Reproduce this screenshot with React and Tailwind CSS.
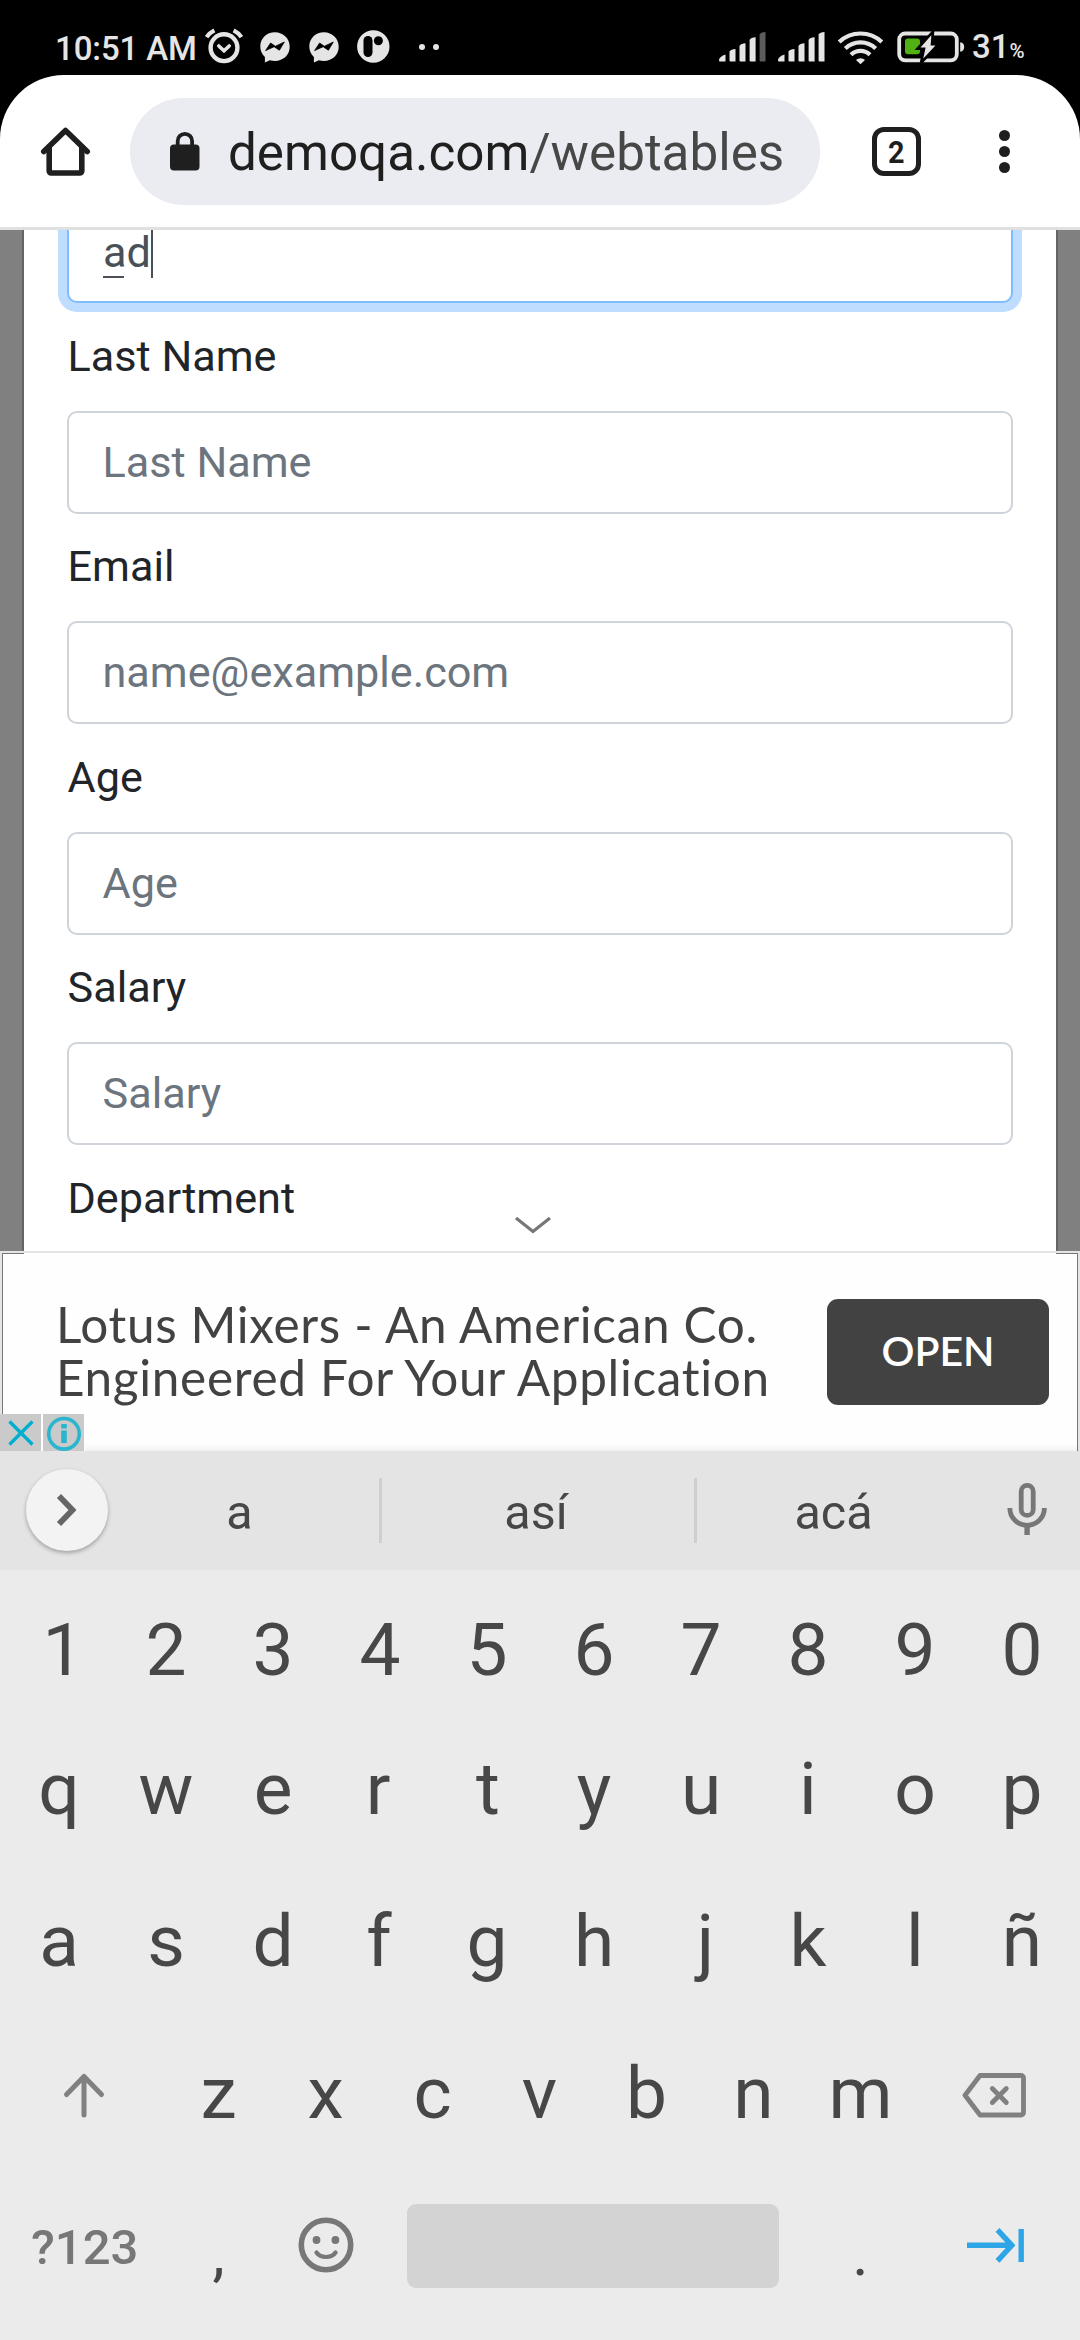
function AlarmIcon() {
  return (
    <svg width="42" height="38" viewBox="203 28 42 38" fill="none" stroke="#e5e5e5" strokeLinecap="round">
      <circle cx="224" cy="47.7" r="13.4" strokeWidth="4.4" />
      <path d="M218.8 46 L224 50.8 L229.2 46" strokeWidth="3.6" />
      <path d="M206.600 37.200 Q209.500 32.800 214.400 30.400 M241.400 37.200 Q238.500 32.800 233.600 30.400" strokeWidth="4.200" strokeLinecap="butt" />
    </svg>
  );
}

function MessengerIcon() {
  return (
    <svg width="30" height="31" viewBox="0 0 30 31">
      <path d="M15 .3C6.700 .3.3 6.400.3 14.500c0 4.200 1.700 7.900 4.600 10.500v5.400l5-2.100c1.600.5 3.300.7 5.100.7 8.300 0 14.700-6.100 14.700-14.200S23.300.3 15 .3z" fill="#e5e5e5" />
      <path d="M5.600 18.600l5-7.600 4.800 3.300 8.900-4.300-4.900 8.200-5.300-3.500z" fill="#000" stroke="#000" strokeWidth=".8" strokeLinejoin="round" />
    </svg>
  );
}

function PatreonIcon() {
  return (
    <svg width="33" height="33" viewBox="356.500 30 33 33">
      <circle cx="372.800" cy="46.500" r="16.200" fill="#e5e5e5" />
      <rect x="363" y="36" width="9" height="21" rx="4.500" />
      <circle cx="377.900" cy="40.700" r="4.500" />
    </svg>
  );
}

function SignalIcon({ last }) {
  return (
    <svg width="47" height="32" viewBox="0 0 47 32" fill="#e5e5e5">
      <path d="M0 28.500Q1 25.500 6.500 23.500V30.500H1Q0 30.500 0 29.500z" />
      <path d="M10.500 20.500Q12 18.300 16.500 18V30.500H11.500Q10.500 30.500 10.500 29.500z" />
      <path d="M20.500 15Q22 12.500 26.500 12.300V30.500H21.500Q20.500 30.500 20.500 29.500z" />
      <path d="M30.600 9Q32 6.500 36.600 6.300V30.500H31.600Q30.600 30.500 30.600 29.500z" />
      <path d="M40.600 3.500Q42 1 46.500 1V30.500H41.600Q40.600 30.500 40.600 29.500z" fill={last} />
    </svg>
  );
}

function WifiIcon() {
  return (
    <svg width="47" height="35" viewBox="0 0 47 35" fill="none" stroke="#e5e5e5" strokeWidth="4.200">
      <path d="M2.200 12a31 31 0 0 1 42.600 0" />
      <path d="M8.300 18.400a22 22 0 0 1 30.400 0" />
      <path d="M14 24.800a13.500 13.500 0 0 1 19 0" />
      <path d="M19 30a6.500 6.500 0 0 1 9 0l-4.500 4.200z" fill="#e5e5e5" stroke="none" />
    </svg>
  );
}

function BatteryIcon() {
  return (
    <svg width="68" height="34" viewBox="897 29.500 68 34">
      <rect x="899.200" y="33" width="57.600" height="26.800" rx="6" fill="none" stroke="#e5e5e5" strokeWidth="3.800" />
      <rect x="905" y="38" width="15" height="15.700" rx="3" fill="#50b014" />
      <path d="M960.200 41.800q4 .5 4 4.700t-4 4.700z" fill="#e5e5e5" />
      <path d="M933 31 L917.500 48.300 H924 L921 62.500 L938.500 43.700 H932z" fill="#e5e5e5" stroke="#000" strokeWidth="2.600" />
    </svg>
  );
}

function StatusBar() {
  return (
    <header className="flex h-[75px] w-full items-center bg-black pt-[18px] text-[#e5e5e5]">
      <div className="ml-[55px] w-[148px] pt-[4px] text-[33px] leading-[40px] font-medium tracking-[-0.1px] whitespace-nowrap">10:51 AM</div>
      <div><AlarmIcon /></div>
      <div className="ml-[15px] pt-[1px]"><MessengerIcon /></div>
      <div className="ml-[19px] pt-[1px]"><MessengerIcon /></div>
      <div className="ml-[18px]"><PatreonIcon /></div>
      <div className="ml-[29px] h-[6px] w-[6px] rounded-full bg-[#e5e5e5]" />
      <div className="ml-[8px] h-[6px] w-[6px] rounded-full bg-[#e5e5e5]" />
      <div className="ml-auto flex items-center pt-[1px]">
        <SignalIcon last="#5c5c5c" />
        <div className="ml-[12px]"><SignalIcon last="#e5e5e5" /></div>
        <div className="ml-[12px]"><WifiIcon /></div>
        <div className="ml-[13px]"><BatteryIcon /></div>
      </div>
      <div className="ml-[7px] flex w-[108px] items-baseline pt-[4px] leading-[40px] font-medium">
        <span className="text-[33px]">31</span>
        <span className="text-[20.500px]">%</span>
      </div>
    </header>
  );
}

function BrowserBar() {
  return (
    <div className="bg-black">
      <div className="flex h-[155px] items-center rounded-t-[64px] border-b-[3px] border-[#e0e0e0] bg-white">
        <svg className="ml-[40px]" width="51" height="51" viewBox="40 126 51 51" fill="none" stroke="#1f1f1f" strokeWidth="5.600" strokeLinejoin="round" strokeLinecap="round">
          <path d="M49.200 147v24a2 2 0 0 0 2 2h28.600a2 2 0 0 0 2-2v-24" />
          <path d="M43.800 151.500L65.500 130.500l21.700 21" />
        </svg>
        <div className="ml-[39px] flex h-[107px] w-[690px] items-center rounded-full bg-[#ebecf1] pl-[40px]">
          <svg width="30" height="40" viewBox="0 0 30 40">
            <path d="M7.700 15V10a7.200 7.200 0 0 1 14.400 0V15" fill="none" stroke="#1f1f1f" strokeWidth="3.800" />
            <rect x="0" y="13.500" width="29.500" height="26" rx="4" fill="#1f1f1f" />
          </svg>
          <div className="ml-[28px] pt-[4px] text-[51.200px] leading-[70px] whitespace-nowrap text-[#1f1f1f]">
            demoqa.com<span className="text-[#474747]">/webtables</span>
          </div>
        </div>
        <div className="ml-[52px] flex h-[49px] w-[49px] items-center justify-center rounded-[12px] border-[5.500px] border-[#1f1f1f] text-[32px] leading-none font-bold text-[#1f1f1f]">
          <span className="scale-x-90 pt-[1px]">2</span>
        </div>
        <div className="ml-[78px] flex flex-col gap-[5px]">
          <div className="h-[11px] w-[11px] rounded-full bg-[#1f1f1f]" />
          <div className="h-[11px] w-[11px] rounded-full bg-[#1f1f1f]" />
          <div className="h-[11px] w-[11px] rounded-full bg-[#1f1f1f]" />
        </div>
      </div>
    </div>
  );
}

function Label({ children }) {
  return <div className="h-[87px] pt-[1px] pl-[0.500px] text-[43.200px] leading-[64px] text-[#212529]">{children}</div>;
}

function Field({ label, placeholder }) {
  return (
    <div className="h-[210.600px]">
      <Label>{label}</Label>
      <div className="flex h-[103px] items-center rounded-[10px] border-2 border-[#ced4da] pt-[1px] pl-[33.500px] text-[43.200px] leading-[64px] text-[#6c757d]">{placeholder}</div>
    </div>
  );
}

function PageForm() {
  return (
    <main className="h-[1021px] bg-[#808080] px-[22px]">
      <div className="relative h-full border-x-2 border-[#656565] bg-white px-[43px]">
        <div className="-mx-[9px] rounded-b-[19px] bg-[#bfdeff] px-[9px] pb-[9px]">
          <div className="flex h-[73px] rounded-b-[10px] border-2 border-t-0 border-[#80bdff] bg-white pl-[34px] text-[43.200px] leading-[46px] text-[#495057]">
            <span className="relative h-[48px]">
              a
              <span className="absolute bottom-0 left-0 h-[2px] w-[21px] bg-[#495057]" />
            </span>
            <span className="h-[48px]">d</span>
            <span className="h-[48px] w-[2px] bg-[#495057]" />
          </div>
        </div>
        <div className="pt-[11.600px]">
          <Field label="Last Name" placeholder="Last Name" />
          <Field label="Email" placeholder="name@example.com" />
          <Field label="Age" placeholder="Age" />
          <Field label="Salary" placeholder="Salary" />
          <Label>Department</Label>
        </div>
        <svg className="absolute top-[987px] left-[491px]" width="36" height="17" viewBox="0 0 36 17" fill="none" stroke="#777777" strokeWidth="3.200">
          <path d="M1 1L18 14.500L35 1" />
        </svg>
      </div>
    </main>
  );
}

function AdBanner() {
  return (
    <section className="flex h-[200px] flex-col border-t-2 border-[#e5e5e5] bg-[#e5e5e5] px-[2px]">
      <div className="relative flex h-[198px] border-x border-[#777777] bg-[#fefefe] font-['Lato',sans-serif]">
        <div className="absolute top-0 left-0 h-px w-[21px] bg-[#777777]" />
        <div className="absolute top-0 right-0 h-px w-[21px] bg-[#777777]" />
        <p className="ml-[53px] w-[771px] pt-[45px] text-[49.500px] leading-[53px] whitespace-nowrap text-[#424242]">
          <span className="block tracking-[0.650px]">Lotus Mixers - An American Co.</span>
          <span className="block tracking-[0.670px]">Engineered For Your Application</span>
        </p>
        <button className="mt-[46px] h-[106px] w-[222px] rounded-[11px] bg-[#424242] pb-[2px] text-[41px] font-semibold text-white">OPEN</button>
        <div className="absolute right-0 bottom-0 left-[82px] h-[7px] bg-linear-to-b from-transparent to-black/5" />
        <div className="absolute bottom-0 -left-[3px] flex gap-[2px] bg-white">
          <div className="flex h-[37px] w-[41px] items-center justify-center bg-[#cacaca]">
            <svg width="26" height="26" viewBox="0 0 26 26" stroke="#00aecd" strokeWidth="3.400">
              <path d="M1.500 1.500L24.500 24.500M24.500 1.500L1.500 24.500" />
            </svg>
          </div>
          <div className="flex h-[37px] w-[41px] items-center justify-center bg-[#cacaca]">
            <svg width="36" height="36" viewBox="0 0 36 36" fill="none" stroke="#2bb5cf">
              <circle cx="18" cy="18.800" r="15.300" strokeWidth="3.600" />
              <path d="M18 15.500V28" strokeWidth="5.600" />
              <path d="M18 9V13.500" strokeWidth="5.600" />
            </svg>
          </div>
        </div>
      </div>
    </section>
  );
}

function Suggestions() {
  return (
    <div className="flex h-[119px] items-center bg-[#e4e4e4] text-[48.500px] text-[#474747]">
      <div className="-mt-[2px] ml-[26px] flex h-[82px] w-[82px] items-center justify-center rounded-full bg-[#f3f3f3] shadow-[0_2px_4px_rgba(0,0,0,0.3)]">
        <svg width="24" height="34" viewBox="0 0 24 34" fill="none" stroke="#666666" strokeWidth="5.800">
          <path d="M4 3L17.500 17L4 31" />
        </svg>
      </div>
      <div className="w-[271px] pt-[5px] pr-[8px] text-center">a</div>
      <div className="h-[65px] w-[3px] bg-[#cfcfcf]" />
      <div className="w-[312px] pt-[5px] pr-[4px] text-center">así</div>
      <div className="h-[65px] w-[3px] bg-[#cfcfcf]" />
      <div className="w-[273px] pt-[5px] text-center">acá</div>
      <svg className="-mt-[3px] ml-[37px]" width="40" height="54" viewBox="1006.500 1482 40 54" fill="none" stroke="#777777" strokeWidth="4.800">
        <rect x="1020.700" y="1485.400" width="12" height="30" rx="6" />
        <path d="M1009.300 1508a17.300 17.300 0 0 0 34.600 0" />
        <path d="M1026.600 1524v11" strokeWidth="5.400" />
      </svg>
    </div>
  );
}

// Glyphs whose ink sits off the middle of their advance width.
const OPTICAL_SHIFT = {
  1: "pl-[8px]",
  j: "pl-[9px]",
  t: "pl-[2px]",
  r: "pr-[4px]",
  f: "pr-[2px]",
};

function KeyRow({ keys, className }) {
  return (
    <div className={className}>
      {keys.map((k) => (
        <div key={k} className={`w-[107px] text-center ${OPTICAL_SHIFT[k] ?? ""}`}>{k}</div>
      ))}
    </div>
  );
}

function Keyboard() {
  return (
    <section className="h-[770px] bg-[#ebebeb] text-[73px] leading-[90px] text-[#474747]">
      <KeyRow keys={[..."1234567890"]} className="flex h-[139px] pt-[35px] pl-[5.500px]" />
      <KeyRow keys={[..."qwertyuiop"]} className="flex h-[152px] pt-[35px] pl-[5.500px]" />
      <KeyRow keys={[..."asdfghjklñ"]} className="flex h-[152px] pt-[35px] pl-[5.500px]" />
      <div className="flex h-[152px] pt-[35px]">
        <div className="flex w-[165px] justify-center">
          <svg className="mt-[24px] ml-[3px]" width="46" height="48" viewBox="61 2072 46 48" fill="none" stroke="#808080" strokeWidth="5" strokeLinecap="round" strokeLinejoin="round">
            <path d="M84 2115V2077M66.500 2094.500L84 2076.500L101.500 2094.500" />
          </svg>
        </div>
        <KeyRow keys={[..."zxcvbnm"]} className="flex" />
        <svg className="mt-[23px] ml-[46px]" width="68" height="48" viewBox="960 2071 68 48" fill="none" stroke="#808080" strokeWidth="4.800" strokeLinejoin="round" strokeLinecap="round">
          <path d="M980 2075.500H1021a2.500 2.500 0 0 1 2.500 2.500V2112.500a2.500 2.500 0 0 1-2.500 2.500H980L965 2095.200z" />
          <path d="M992.300 2088.500L1006.300 2102.500M1006.300 2088.500L992.300 2102.500" />
        </svg>
      </div>
      <div className="flex h-[175px]">
        <div className="w-[165px] pt-[38px] pl-[31px] text-[49px] font-medium text-[#777777]">?123</div>
        <div className="w-[107px] pt-[44px] text-center text-[62px]">,</div>
        <svg className="mt-[52px] ml-[25.500px]" width="56" height="56" viewBox="0 0 56 56" fill="none" stroke="#777777" strokeWidth="5.600" strokeLinecap="round">
          <circle cx="28" cy="28" r="24.700" />
          <circle cx="18.500" cy="23" r="3.900" fill="#777777" stroke="none" />
          <circle cx="37.400" cy="23" r="3.900" fill="#777777" stroke="none" />
          <path d="M18.500 35.500C22.500 41.500 33.500 41.500 37.600 35.500" strokeWidth="4.200" />
        </svg>
        <div className="mt-[39px] ml-[53.500px] h-[84px] w-[372px] rounded-[9px] bg-[#d3d3d3]" />
        <div className="ml-[28px] w-[107px] pt-[44px] text-center text-[62px]">.</div>
        <svg className="mt-[60px] ml-[51px]" width="62" height="40" viewBox="964 2225 62 40" fill="none" stroke="#2ea5e7" strokeWidth="5.400">
          <path d="M966 2245.300H1011M996.500 2229.800L1010.800 2245.300L996.500 2260.800" />
          <path d="M1020.200 2229V2262" />
        </svg>
      </div>
    </section>
  );
}

export default function App() {
  return (
    <div className="h-[2340px] w-[1080px] overflow-hidden bg-white font-['Roboto',sans-serif]">
      <StatusBar />
      <BrowserBar />
      <PageForm />
      <AdBanner />
      <Suggestions />
      <Keyboard />
    </div>
  );
}
